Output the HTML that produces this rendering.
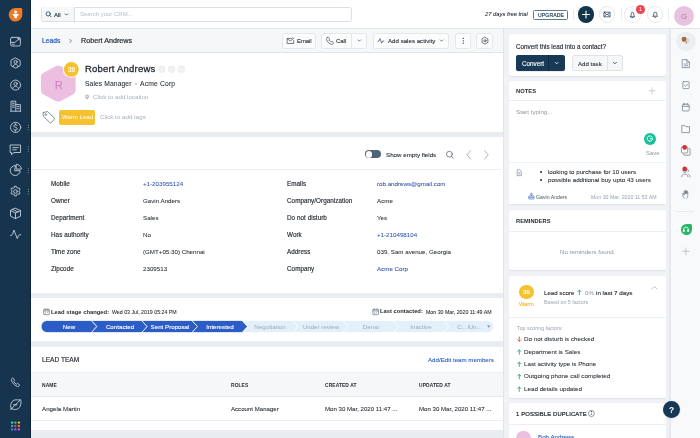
<!DOCTYPE html>
<html><head><meta charset="utf-8">
<style>
*{box-sizing:border-box;margin:0;padding:0}
html,body{width:700px;height:438px;overflow:hidden;background:#f0f2f5;font-family:"Liberation Sans",sans-serif;color:#12344d}
.a{position:absolute;white-space:nowrap}
svg{position:absolute;overflow:visible}
.card{position:absolute;background:#fff}
.t{position:absolute;white-space:nowrap;line-height:1;will-change:transform}
.lb{font-size:6.3px;color:#262c33;-webkit-text-stroke:0.15px #262c33;letter-spacing:0.05px}
.vl{font-size:6.2px;color:#262c33;-webkit-text-stroke:0.05px #262c33}
</style></head><body>
<!-- SIDEBAR -->
<div class="a" style="left:0;top:0;width:31px;height:438px;background:#16344e;border-right:1px solid #0d2338"></div>
<!-- logo -->
<svg style="left:0;top:0" width="31" height="31" viewBox="0 0 31 31">
  <path d="M15.5 8 h5.5 a1.3 1.3 0 0 1 1.3 1.3 v5.4 a6.8 6.8 0 1 1 -6.8 -6.7z" fill="#f07a23"/>
  <circle cx="15.6" cy="12.1" r="1.5" fill="#fff"/>
  <path d="M12.8 14.1 h5.6 a0.4 0.4 0 0 1 0.3 0.6 l-1.9 2 v1.1 a0.5 0.5 0 0 1 -0.5 0.5 h-1.3 a0.5 0.5 0 0 1 -0.5 -0.5 v-1.1 l-1.9 -2 a0.4 0.4 0 0 1 0.3 -0.6z" fill="#fff"/>
</svg>
<!-- sidebar icons -->
<svg style="left:0;top:0" width="31" height="438" viewBox="0 0 31 438" fill="none" stroke="#c5d0da" stroke-width="0.9" stroke-linecap="round" stroke-linejoin="round">
  <!-- dashboard -->
  <rect x="10.6" y="37.4" width="9.8" height="8.6" rx="1.5"/>
  <path d="M11.2 42.4 h3.6 l4.2 -3.4 M17.6 38.6 h1.6 v1.4 M12.2 44.2 h2"/>
  <!-- contacts -->
  <path d="M15.6 58 l4.6 2.6 v5 l-4.6 2.6 l-4.6 -2.6 v-5z"/>
  <circle cx="15.6" cy="62" r="1.6"/>
  <path d="M13 66.6 c0.4 -1.4 1.3 -2.2 2.6 -2.2 s2.2 0.8 2.6 2.2"/>
  <!-- accounts -->
  <circle cx="15.6" cy="85.1" r="5"/>
  <circle cx="15.6" cy="83.8" r="1.6"/>
  <path d="M12.7 88.5 c0.5 -1.5 1.5 -2.2 2.9 -2.2 s2.4 0.7 2.9 2.2"/>
  <!-- building -->
  <path d="M11 111 v-9.8 h4.8 v9.8 M15.8 104.6 h4.6 v6.4 M10.6 111.2 h10.2 M12.4 103.2 h2 M12.4 105.2 h2 M12.4 107.2 h2 M17.2 106.6 h1.8 M17.2 108.6 h1.8"/>
  <!-- deals $ -->
  <circle cx="15.6" cy="127.4" r="5.1"/>
  <path d="M17.2 125.6 c-0.4 -0.7 -1 -0.9 -1.7 -0.9 c-1 0 -1.7 0.5 -1.7 1.3 c0 1.8 3.5 0.9 3.5 2.8 c0 0.8 -0.8 1.3 -1.8 1.3 c-0.8 0 -1.4 -0.3 -1.8 -1 M15.5 123.8 v1 M15.5 130.2 v1"/>
  <!-- chat -->
  <path d="M10.5 145 h10 v7.5 h-6.5 l-2.5 2.2 v-2.2 h-1z"/>
  <path d="M12.8 147.6 h5.4 M12.8 149.8 h3.6"/>
  <!-- pie -->
  <path d="M15 165.5 a5 5 0 1 0 5.2 5.2 h-5.2z"/>
  <path d="M16.6 164.3 a5 5 0 0 1 4.8 4.8 h-4.8z"/>
  <!-- gear -->
  <circle cx="15.5" cy="191.5" r="1.8"/>
  <path d="M14.6 186.3 h1.8 l0.3 1.3 l1.2 0.7 l1.3 -0.4 l0.9 1.6 l-1 0.9 v1.4 l1 0.9 l-0.9 1.6 l-1.3 -0.4 l-1.2 0.7 l-0.3 1.3 h-1.8 l-0.3 -1.3 l-1.2 -0.7 l-1.3 0.4 l-0.9 -1.6 l1 -0.9 v-1.4 l-1 -0.9 l0.9 -1.6 l1.3 0.4 l1.2 -0.7z"/>
  <!-- cube -->
  <path d="M15.5 208.3 l5 2.3 v5.6 l-5 2.4 l-5 -2.4 v-5.6z M10.5 210.6 l5 2.4 l5 -2.4 M15.5 213 v5.6 M12.8 209.5 l5 2.4"/>
  <!-- activity -->
  <path d="M10.6 235.6 c1.2 0 1.8 -0.6 2.4 -2.6 l0.9 -3 l3.4 8.6 l1 -2.6 c0.4 -0.9 1 -1.4 2.4 -1.4"/>
  <!-- phone -->
  <path d="M12 378.5 c-0.6 0.5 -0.9 1.1 -0.5 2.2 c0.9 2.4 2.9 4.6 5.5 5.6 c1 0.4 1.7 0.1 2.2 -0.5 l0.6 -0.8 l-2.2 -1.6 l-1 0.8 c-1.4 -0.6 -2.3 -1.5 -2.9 -2.9 l0.8 -1 l-1.6 -2.2z"/>
  <!-- compass -->
  <path d="M11.2 408.6 c-1.6 -3.6 0.2 -8.6 4.8 -8.8 c1.6 0 3.4 0.4 4.6 -0.3 c1.2 4.4 -0.6 10 -5.4 10 c-1.4 0 -2.6 -0.4 -4 -0.9z"/>
  <path d="M10.6 409.6 l9.4 -9.4 M13.6 404.8 h3.4"/>
</svg>
<!-- grip dots -->
<svg style="left:0;top:0" width="31" height="438" fill="#8da0b2">
  <circle cx="28.3" cy="125.3" r="0.55"/><circle cx="28.3" cy="127.5" r="0.55"/><circle cx="28.3" cy="129.7" r="0.55"/>
  <circle cx="28.3" cy="146.8" r="0.55"/><circle cx="28.3" cy="149" r="0.55"/><circle cx="28.3" cy="151.2" r="0.55"/>
  <circle cx="28.3" cy="168.3" r="0.55"/><circle cx="28.3" cy="170.5" r="0.55"/><circle cx="28.3" cy="172.7" r="0.55"/>
  <circle cx="28.3" cy="189.3" r="0.55"/><circle cx="28.3" cy="191.5" r="0.55"/><circle cx="28.3" cy="193.7" r="0.55"/>
</svg>
<!-- app grid -->
<svg style="left:0;top:0" width="31" height="438">
  <circle cx="12.1" cy="422.6" r="1.2" fill="#3fd0d8"/>
  <circle cx="15.4" cy="422.6" r="1.2" fill="#3cc46a"/>
  <circle cx="18.9" cy="422.6" r="1.2" fill="#f5b82e"/>
  <circle cx="12.1" cy="426.0" r="1.2" fill="#4a8ff0"/>
  <circle cx="15.4" cy="426.0" r="1.2" fill="#e8473f"/>
  <circle cx="18.9" cy="426.0" r="1.2" fill="#f2702a"/>
  <circle cx="12.1" cy="429.4" r="1.2" fill="#3f7fd0"/>
  <circle cx="15.4" cy="429.4" r="1.2" fill="#9b59d0"/>
  <circle cx="18.9" cy="429.4" r="1.2" fill="#c05ad8"/>
</svg>

<!-- HEADER -->
<div class="a" style="left:31px;top:0;width:669px;height:29px;background:#fff;border-bottom:1px solid #e3e8ed"></div>
<div class="a" style="left:41.3px;top:6.5px;width:310.7px;height:15.8px;border:0.8px solid #d8dfe6;border-radius:2.5px;background:#fff"></div>
<div class="a" style="left:42.1px;top:7.3px;width:32.2px;height:14.2px;border-radius:2px 0 0 2px;background:#f5f7f9"></div>
<div class="a" style="left:74.3px;top:6.5px;width:0.8px;height:15.8px;background:#d8dfe6"></div>
<svg style="left:0;top:0" width="100" height="30" fill="none" stroke="#12344d" stroke-width="0.75" stroke-linecap="round">
  <circle cx="48.2" cy="13.9" r="2.1"/><path d="M49.8 15.5 l1.4 1.4"/>
  <path d="M65.3 13.9 l1.2 1.2 l1.2 -1.2"/>
</svg>
<div class="t" style="left:54.4px;top:11.9px;font-size:6px;color:#262c33;-webkit-text-stroke:0.15px #262c33">All</div>
<div class="t" style="left:80px;top:11.4px;font-size:6px;color:#b4bfca">Search your CRM...</div>

<div class="t" style="left:484.8px;top:12.3px;font-size:5.8px;font-style:italic;color:#262c33;-webkit-text-stroke:0.07px #262c33">27 days free trial</div>
<div class="a" style="left:532.6px;top:10.3px;width:35.2px;height:9.5px;border:0.9px solid #5d7a93;border-radius:1.5px"></div>
<div class="t" style="left:538px;top:13.3px;font-size:5.1px;color:#12344d;letter-spacing:0.12px;-webkit-text-stroke:0.15px #12344d">UPGRADE</div>
<div class="a" style="left:572.6px;top:9.5px;width:0.8px;height:10px;background:#e6eaee"></div>
<div class="a" style="left:577.8px;top:6.3px;width:16.4px;height:16.4px;border-radius:50%;background:#12344d"></div>
<svg style="left:0;top:0" width="700" height="30" fill="none" stroke-linecap="round">
  <path d="M586 11 v7 M582.5 14.5 h7" stroke="#fff" stroke-width="1.1"/>
</svg>
<div class="a" style="left:598.8px;top:6.3px;width:16.4px;height:16.4px;border-radius:50%;border:0.8px solid #e6eaee;background:#fff"></div>
<div class="a" style="left:620.5px;top:8px;width:0.8px;height:13px;background:#eceff2"></div>
<div class="a" style="left:624.3px;top:6.3px;width:16.4px;height:16.4px;border-radius:50%;border:0.8px solid #e6eaee;background:#fff"></div>
<div class="a" style="left:647.1px;top:6.3px;width:16.4px;height:16.4px;border-radius:50%;border:0.8px solid #e6eaee;background:#fff"></div>
<div class="a" style="left:668.4px;top:8px;width:0.8px;height:13px;background:#eceff2"></div>
<svg style="left:0;top:0" width="700" height="30" fill="none" stroke="#12344d" stroke-width="0.7" stroke-linecap="round" stroke-linejoin="round">
  <rect x="603.9" y="12.2" width="6.2" height="4.6" rx="0.4"/><path d="M604.1 12.5 l2.9 2.3 l2.9 -2.3 M604.2 16.5 l2 -1.8 M609.8 16.5 l-2 -1.8"/>
  <path d="M630.3 16.8 h4.4 l-0.6 -0.9 l-0.5 -2.6 a1.1 1.1 0 0 0 -2.2 0 l-0.5 2.6z M631.7 17.4 h1.6"/>
  <path d="M653 16.3 h4.6 l-0.7 -0.9 v-1.6 a1.6 1.6 0 0 0 -3.2 0 v1.6z M654.6 17.3 a0.8 0.6 0 0 0 1.4 0"/>
</svg>
<div class="a" style="left:635.8px;top:5.3px;width:9px;height:9px;border-radius:50%;background:#f0434d"></div>
<div class="t" style="left:638.9px;top:7.4px;font-size:5.4px;color:#fff">1</div>
<div class="a" style="left:673.6px;top:5.8px;width:20px;height:20px;border-radius:50%;background:#e9c2e0"></div>
<div class="t" style="left:680.6px;top:12.5px;font-size:7.9px;color:#a3849c">G</div>

<!-- MAIN BG -->
<div class="a" style="left:31px;top:29px;width:473.2px;height:409px;background:#e9edf1;border-right:0.8px solid #e0e5ea"></div>
<!-- BREADCRUMB -->
<div class="a" style="left:31px;top:29px;width:472.4px;height:24px;background:#f5f7f9;border-bottom:1px solid #dfe4e9"></div>
<div class="t" style="left:41.7px;top:37.7px;font-size:6.7px;color:#2c5cc5;-webkit-text-stroke:0.22px #2c5cc5">Leads</div>
<svg style="left:0;top:0" width="700" height="60" fill="none" stroke="#475867" stroke-width="0.7" stroke-linecap="round" stroke-linejoin="round">
  <path d="M69.8 39.3 l1.6 1.6 l-1.6 1.6"/>
</svg>
<div class="t" style="left:80.5px;top:36.9px;font-size:7.2px;color:#262c33;-webkit-text-stroke:0.2px #262c33">Robert Andrews</div>

<!-- BREADCRUMB ACTION BUTTONS -->
<div class="a" style="left:282.3px;top:32.8px;width:33.9px;height:16px;border:0.8px solid #e3e8ed;border-radius:2.5px;background:#fbfcfc"></div>
<div class="a" style="left:321.4px;top:32.8px;width:46px;height:16px;border:0.8px solid #e3e8ed;border-radius:2.5px;background:#fbfcfc"></div>
<div class="a" style="left:351.2px;top:32.8px;width:0.8px;height:16px;background:#e3e8ed"></div>
<div class="a" style="left:372.8px;top:32.8px;width:76.7px;height:16px;border:0.8px solid #e3e8ed;border-radius:2.5px;background:#fbfcfc"></div>
<div class="a" style="left:455.4px;top:32.8px;width:15.8px;height:16px;border:0.8px solid #e3e8ed;border-radius:2.5px;background:#fbfcfc"></div>
<div class="a" style="left:476.4px;top:32.8px;width:17.1px;height:16px;border:0.8px solid #e3e8ed;border-radius:2.5px;background:#fbfcfc"></div>
<svg style="left:0;top:0" width="700" height="60" fill="none" stroke="#283c4f" stroke-width="0.65" stroke-linecap="round" stroke-linejoin="round">
  <path d="M291.5 38.5 h-4.4 v5 h6.6 v-3"/><path d="M287.2 38.7 l3.1 2.3 l2.4 -1.8"/><path d="M292.6 37.4 l1.3 1.3"/>
  <path d="M327.2 37.6 c0.5 -0.5 1 -0.6 1.4 -0.2 l0.9 1.1 c0.3 0.4 0.2 0.8 -0.2 1.1 l-0.4 0.3 c0.3 0.9 1 1.7 1.9 2.1 l0.4 -0.4 c0.3 -0.3 0.7 -0.4 1.1 -0.1 l1 0.8 c0.4 0.4 0.3 0.9 -0.1 1.3 c-0.6 0.6 -1.3 0.9 -2 0.7 c-2.3 -0.7 -4.2 -2.6 -4.7 -4.9 c-0.1 -0.6 0.2 -1.2 0.7 -1.8z"/>
  <path d="M358 39.9 l1.3 1.3 l1.3 -1.3"/>
  <path d="M378 41.2 h0.9 l1.1 -2.6 l1.6 4.6 l1.1 -2.2 h1.2"/>
  <path d="M440.3 39.9 l1.3 1.3 l1.3 -1.3"/>
  <path d="M485 37.4 l2.9 1.7 v3.4 l-2.9 1.7 l-2.9 -1.7 v-3.4z"/><circle cx="485" cy="40.8" r="1.1"/>
</svg>
<svg style="left:0;top:0" width="700" height="60" fill="#12344d">
  <circle cx="463.3" cy="38.4" r="0.6"/><circle cx="463.3" cy="40.8" r="0.6"/><circle cx="463.3" cy="43.2" r="0.6"/>
</svg>
<div class="t" style="left:296.9px;top:37.9px;font-size:6px;letter-spacing:-0.08px;color:#262c33;-webkit-text-stroke:0.1px #262c33">Email</div>
<div class="t" style="left:336px;top:37.9px;font-size:6px;letter-spacing:-0.05px;color:#262c33;-webkit-text-stroke:0.1px #262c33">Call</div>
<div class="t" style="left:387.6px;top:37.9px;font-size:6.15px;color:#262c33;-webkit-text-stroke:0.1px #262c33">Add sales activity</div>

<!-- PROFILE CARD -->
<div class="card" style="left:31px;top:53px;width:472.4px;height:78.8px"></div>
<svg style="left:0;top:0" width="700" height="140">
  <path d="M55.62 66.13 Q58.25 64.70 60.88 66.13 L72.97 72.72 Q75.60 74.15 75.60 77.15 L75.60 90.05 Q75.60 93.05 72.97 94.48 L60.88 101.07 Q58.25 102.50 55.62 101.07 L43.53 94.48 Q40.90 93.05 40.90 90.05 L40.90 77.15 Q40.90 74.15 43.53 72.72 Z" fill="#ecbfe1"/>
  <circle cx="71.3" cy="69.4" r="8.4" fill="#fff"/>
  <circle cx="71.3" cy="69.4" r="7.4" fill="#f5c12e"/>
  <circle cx="161.7" cy="69.2" r="3.7" fill="#efefef"/><circle cx="171.5" cy="69.2" r="3.7" fill="#efefef"/><circle cx="181.3" cy="69.2" r="3.7" fill="#efefef"/>
  <path d="M162.3 67.4 h-0.4 a0.5 0.5 0 0 0 -0.5 0.5 v3.6 M161 69 h1.2" stroke="#fff" stroke-width="0.55" fill="none"/>
  <path d="M169.6 68.6 l1.4 1.4 l2.4 -2" stroke="#fff" stroke-width="0.6" fill="none"/>
  <path d="M179.9 68.6 v2.2 M181.1 70.8 v-2.2 M181.1 69.4 a0.9 0.9 0 0 1 1.6 0.2 v1.2" stroke="#fff" stroke-width="0.55" fill="none"/>
</svg>
<div class="t" style="left:54.6px;top:79.9px;font-size:10.6px;color:#cf86c1;-webkit-text-stroke:0.25px #cf86c1">R</div>
<div class="t" style="left:67.8px;top:66.6px;font-size:6.3px;color:#fff;-webkit-text-stroke:0.15px #fff">39</div>
<div class="t" style="left:85.4px;top:63.9px;font-size:9.5px;letter-spacing:0.2px;color:#1f2730;-webkit-text-stroke:0.3px #1f2730">Robert Andrews</div>
<div class="t" style="left:85.4px;top:80.6px;font-size:6.7px;letter-spacing:0.12px;color:#262c33;-webkit-text-stroke:0.07px #262c33">Sales Manager</div>
<div class="a" style="left:134.6px;top:82.5px;width:2px;height:2px;border-radius:50%;background:#b8c2cb"></div>
<div class="t" style="left:140px;top:80.6px;font-size:6.7px;letter-spacing:0.2px;color:#262c33;-webkit-text-stroke:0.07px #262c33">Acme Corp</div>
<svg style="left:0;top:0" width="700" height="140">
  <path d="M87.1 99.8 c-1.3 -1.6 -1.9 -2.6 -1.9 -3.4 a1.9 1.9 0 0 1 3.8 0 c0 0.8 -0.6 1.8 -1.9 3.4z" fill="#b3bdc7"/>
  <circle cx="87.1" cy="96.4" r="0.7" fill="#fff"/>
</svg>
<div class="t" style="left:92.6px;top:94.4px;font-size:6.2px;color:#a4b0bc">Click to add location</div>
<svg style="left:0;top:0" width="700" height="140" fill="none" stroke="#5a6f83" stroke-width="0.8" stroke-linejoin="round">
  <path d="M43 112.5 l0.3 3.6 l6.6 6.6 a0.8 0.8 0 0 0 1.1 0 l3.4 -3.4 a0.8 0.8 0 0 0 0 -1.1 l-6.6 -6.6 z"/>
  <circle cx="45.8" cy="114.6" r="0.8"/>
</svg>
<div class="a" style="left:59.1px;top:109.5px;width:36px;height:15px;border-radius:2px;background:#f5c12e"></div>
<div class="t" style="left:62.2px;top:114.2px;font-size:6.05px;color:#fff">Warm Lead</div>
<div class="t" style="left:100px;top:113.8px;font-size:6.2px;color:#a4b0bc">Click to add tags</div>

<!-- DETAILS CARD -->
<div class="card" style="left:31px;top:136.7px;width:472.4px;height:156.4px"></div>
<div class="a" style="left:31px;top:169px;width:470px;height:1px;background:#ebeff3"></div>
<div class="a" style="left:365px;top:150.4px;width:15.8px;height:8px;border-radius:4px;background:#4f6477"></div>
<div class="a" style="left:365.6px;top:151px;width:6.8px;height:6.8px;border-radius:50%;background:#fff;box-shadow:0 0 0.6px rgba(0,0,0,.4)"></div>
<div class="t" style="left:385.7px;top:151.7px;font-size:6.2px;color:#262c33;-webkit-text-stroke:0.1px #262c33">Show empty fields</div>
<svg style="left:0;top:0" width="700" height="200" fill="none" stroke="#475867" stroke-width="0.7" stroke-linecap="round" stroke-linejoin="round">
  <circle cx="449.4" cy="154.2" r="2.9"/><path d="M451.5 156.3 l2 2"/>
  <path d="M470.6 150.6 l-3.6 4.2 l3.6 4.2" stroke="#8593a1"/>
  <path d="M484.6 150.6 l3.6 4.2 l-3.6 4.2" stroke="#8593a1"/>
</svg>
<div class="t lb" style="left:50.8px;top:181.0px">Mobile</div><div class="t vl" style="left:143px;top:181.0px;color:#2c5cc5">+1-203955124</div>
<div class="t lb" style="left:286.8px;top:181.0px">Emails</div><div class="t vl" style="left:377px;top:181.0px;color:#2c5cc5">rob.andrews@gmail.com</div>
<div class="t lb" style="left:50.8px;top:198.0px">Owner</div><div class="t vl" style="left:143px;top:198.0px;">Gavin Anders</div>
<div class="t lb" style="left:286.8px;top:198.0px">Company/Organization</div><div class="t vl" style="left:377px;top:198.0px;">Acme</div>
<div class="t lb" style="left:50.8px;top:215.0px">Department</div><div class="t vl" style="left:143px;top:215.0px;">Sales</div>
<div class="t lb" style="left:286.8px;top:215.0px">Do not disturb</div><div class="t vl" style="left:377px;top:215.0px;">Yes</div>
<div class="t lb" style="left:50.8px;top:232.0px">Has authority</div><div class="t vl" style="left:143px;top:232.0px;">No</div>
<div class="t lb" style="left:286.8px;top:232.0px">Work</div><div class="t vl" style="left:377px;top:232.0px;color:#2c5cc5">+1-210498104</div>
<div class="t lb" style="left:50.8px;top:249.0px">Time zone</div><div class="t vl" style="left:143px;top:249.0px;">(GMT+05:30) Chennai</div>
<div class="t lb" style="left:286.8px;top:249.0px">Address</div><div class="t vl" style="left:377px;top:249.0px;">039, Sam avenue, Georgia</div>
<div class="t lb" style="left:50.8px;top:266.0px">Zipcode</div><div class="t vl" style="left:143px;top:266.0px;">2309513</div>
<div class="t lb" style="left:286.8px;top:266.0px">Company</div><div class="t vl" style="left:377px;top:266.0px;color:#2c5cc5">Acme Corp</div>

<!-- STAGE CARD -->
<div class="card" style="left:31px;top:298px;width:472.4px;height:43px"></div>
<svg style="left:0;top:0" width="700" height="438" fill="none" stroke="#475867" stroke-width="0.6">
  <rect x="43.7" y="309.3" width="5.6" height="5.4" rx="0.6"/><path d="M43.7 310.9 h5.6 M45.1 308.5 v1.4 M47.9 308.5 v1.4 M45.3 312.3 h0.8 M47 312.3 h0.8 M45.3 313.6 h0.8"/>
  <rect x="372.8" y="309.3" width="5.6" height="5.4" rx="0.6"/><path d="M372.8 310.9 h5.6 M374.2 308.5 v1.4 M377 308.5 v1.4 M374.4 312.3 h0.8 M376.1 312.3 h0.8 M374.4 313.6 h0.8"/>
</svg>
<div class="t" style="left:51.4px;top:309.7px;font-size:5.85px;font-weight:bold;color:#262c33">Lead stage changed:</div>
<div class="t" style="left:111.7px;top:310.2px;font-size:5.25px;color:#262c33;-webkit-text-stroke:0.07px #262c33">Wed 03 Jul, 2019 05:24 PM</div>
<div class="t" style="left:380px;top:309.3px;font-size:5.8px;font-weight:bold;color:#262c33">Last contacted:</div>
<div class="t" style="left:425.5px;top:309.9px;font-size:5.25px;color:#262c33;-webkit-text-stroke:0.07px #262c33">Mon 30 Mar, 2020 11:49 AM</div>
<svg style="left:0;top:0" width="700" height="438">
<path d="M47.15 320.5 H91.39 L96.89 326.55 L91.39 332.6 H47.15 A6.05 6.05 0 0 1 47.15 320.5Z" fill="#2c5cc5" stroke="#fff" stroke-width="0.75" stroke-linejoin="miter"/>
<path d="M91.39 320.5 H141.68 L147.18 326.55 L141.68 332.6 H91.39 L96.89 326.55Z" fill="#2c5cc5" stroke="#fff" stroke-width="0.75" stroke-linejoin="miter"/>
<path d="M141.68 320.5 H191.97 L197.47 326.55 L191.97 332.6 H141.68 L147.18 326.55Z" fill="#2c5cc5" stroke="#fff" stroke-width="0.75" stroke-linejoin="miter"/>
<path d="M191.97 320.5 H242.26 L247.76 326.55 L242.26 332.6 H191.97 L197.47 326.55Z" fill="#2c5cc5" stroke="#fff" stroke-width="0.75" stroke-linejoin="miter"/>
<path d="M242.26 320.5 H292.54 L298.04 326.55 L292.54 332.6 H242.26 L247.76 326.55Z" fill="#e3effb" stroke="#fff" stroke-width="0.75" stroke-linejoin="miter"/>
<path d="M292.54 320.5 H342.83 L348.33 326.55 L342.83 332.6 H292.54 L298.04 326.55Z" fill="#e3effb" stroke="#fff" stroke-width="0.75" stroke-linejoin="miter"/>
<path d="M342.83 320.5 H393.12 L398.62 326.55 L393.12 332.6 H342.83 L348.33 326.55Z" fill="#e3effb" stroke="#fff" stroke-width="0.75" stroke-linejoin="miter"/>
<path d="M393.12 320.5 H443.41 L448.91 326.55 L443.41 332.6 H393.12 L398.62 326.55Z" fill="#e3effb" stroke="#fff" stroke-width="0.75" stroke-linejoin="miter"/>
<path d="M443.41 320.5 H487.65 A6.05 6.05 0 0 1 487.65 332.6 H443.41 L448.91 326.55Z" fill="#e3effb" stroke="#fff" stroke-width="0.75" stroke-linejoin="miter"/>

  <path d="M487 325.6 h3.4 l-1.7 2.2z" fill="#7f93a6"/>
</svg>
<div class="t" style="left:29.24px;width:80px;text-align:center;top:323.55px;font-size:6.2px;color:#fff;-webkit-text-stroke:0.12px #fff">New</div>
<div class="t" style="left:79.53px;width:80px;text-align:center;top:323.55px;font-size:6.2px;color:#fff;-webkit-text-stroke:0.12px #fff">Contacted</div>
<div class="t" style="left:129.82px;width:80px;text-align:center;top:323.55px;font-size:6.2px;color:#fff;-webkit-text-stroke:0.12px #fff">Sent Proposal</div>
<div class="t" style="left:180.11px;width:80px;text-align:center;top:323.55px;font-size:6.2px;color:#fff;-webkit-text-stroke:0.12px #fff">Interested</div>
<div class="t" style="left:230.40px;width:80px;text-align:center;top:323.55px;font-size:6.2px;color:#9ea9b4;">Negotiation</div>
<div class="t" style="left:280.69px;width:80px;text-align:center;top:323.55px;font-size:6.2px;color:#9ea9b4;">Under review</div>
<div class="t" style="left:330.98px;width:80px;text-align:center;top:323.55px;font-size:6.2px;color:#9ea9b4;">Demo</div>
<div class="t" style="left:381.27px;width:80px;text-align:center;top:323.55px;font-size:6.2px;color:#9ea9b4;">Inactive</div>
<div class="t" style="left:428.56px;width:80px;text-align:center;top:323.55px;font-size:6.2px;color:#9ea9b4;letter-spacing:-0.25px">C... /Un...</div>

<!-- LEAD TEAM CARD -->
<div class="card" style="left:31px;top:347.3px;width:472.4px;height:83px"></div>
<div class="t" style="left:41.7px;top:357px;font-size:6.6px;color:#262c33;-webkit-text-stroke:0.15px #262c33">LEAD TEAM</div>
<div class="t" style="left:428px;top:357.2px;font-size:6.15px;color:#2c5cc5;-webkit-text-stroke:0.1px #2c5cc5">Add/Edit team members</div>
<div class="a" style="left:31px;top:371.6px;width:472.4px;height:25px;background:#f5f7f9;border-top:0.8px solid #eef1f4;border-bottom:0.8px solid #e3e8ed"></div>
<div class="t" style="left:41.8px;top:383.7px;font-size:4.9px;font-weight:bold;color:#262c33;letter-spacing:0.1px">NAME</div>
<div class="t" style="left:230.5px;top:383.7px;font-size:4.9px;font-weight:bold;color:#262c33;letter-spacing:0.1px">ROLES</div>
<div class="t" style="left:324.7px;top:383.7px;font-size:4.9px;font-weight:bold;color:#262c33;letter-spacing:0.1px">CREATED AT</div>
<div class="t" style="left:419px;top:383.7px;font-size:4.9px;font-weight:bold;color:#262c33;letter-spacing:0.1px">UPDATED AT</div>
<div class="t" style="left:41.8px;top:405.9px;font-size:6.2px;color:#262c33;-webkit-text-stroke:0.07px #262c33">Angela Martin</div>
<div class="t" style="left:230.5px;top:405.9px;font-size:6.1px;color:#262c33;-webkit-text-stroke:0.07px #262c33">Account Manager</div>
<div class="t" style="left:324.7px;top:405.9px;font-size:6.1px;color:#262c33;-webkit-text-stroke:0.07px #262c33">Mon 30 Mar, 2020 11:47 ...</div>
<div class="t" style="left:419px;top:405.9px;font-size:6.1px;color:#262c33;-webkit-text-stroke:0.07px #262c33">Mon 30 Mar, 2020 11:47 ...</div>
<div class="a" style="left:31px;top:419.6px;width:472.4px;height:0.8px;background:#ebeff3"></div>
<!-- RIGHT PANEL -->
<div class="card" style="left:509px;top:33.5px;width:157px;height:42.5px;border-radius:2px;box-shadow:0 0.5px 1px rgba(18,52,77,.08)"></div>
<div class="t" style="left:516.4px;top:44.3px;font-size:6.3px;color:#262c33;-webkit-text-stroke:0.15px #262c33">Convert this lead into a contact?</div>
<div class="a" style="left:516.3px;top:55px;width:48.5px;height:16.2px;border-radius:2px;background:#183a56;box-shadow:0 0.5px 0.5px rgba(0,0,0,.15)"></div>
<div class="a" style="left:548.2px;top:55px;width:0.8px;height:16.2px;background:#0f2b42"></div>
<div class="t" style="left:521.8px;top:60.6px;font-size:6.3px;color:#fff;-webkit-text-stroke:0.12px #fff">Convert</div>
<div class="a" style="left:572.2px;top:55px;width:50.7px;height:16.3px;border-radius:2px;background:#f5f7f9;border:1px solid #dfe4e9"></div>
<div class="a" style="left:606.8px;top:55px;width:1px;height:16.3px;background:#dfe4e9"></div>
<div class="t" style="left:577.6px;top:60.6px;font-size:6.1px;color:#262c33;-webkit-text-stroke:0.08px #262c33">Add task</div>
<svg style="left:0;top:0" width="700" height="438" fill="none" stroke-linecap="round" stroke-linejoin="round" stroke-width="0.8">
  <path d="M555.2 62.3 l1.5 1.5 l1.5 -1.5" stroke="#fff"/>
  <path d="M613.4 62.3 l1.5 1.5 l1.5 -1.5" stroke="#12344d"/>
</svg>

<div class="card" style="left:509px;top:81.2px;width:157px;height:123.3px;border-radius:2px;box-shadow:0 0.5px 1px rgba(18,52,77,.08)"></div>
<div class="t" style="left:516.4px;top:88.6px;font-size:5.75px;font-weight:bold;color:#262c33;letter-spacing:0.05px">NOTES</div>
<svg style="left:0;top:0" width="700" height="438" fill="none" stroke="#b5c0cb" stroke-width="0.7">
  <path d="M652.1 87.3 v7 M648.6 90.8 h7"/>
</svg>
<div class="a" style="left:509px;top:100px;width:157px;height:0.8px;background:#ebeff3"></div>
<div class="t" style="left:516.3px;top:108.6px;font-size:6.2px;color:#8e979f">Start typing...</div>
<div class="a" style="left:643.8px;top:132.9px;width:11.8px;height:11.8px;border-radius:50%;background:#15c39a"></div>
<svg style="left:0;top:0" width="700" height="438" fill="none" stroke="#fff" stroke-width="1.1" stroke-linecap="round">
  <path d="M652.2 137.1 a2.7 2.7 0 1 0 0.4 1.6 h-2.2" stroke-width="1"/>
</svg>
<div class="t" style="left:645.5px;top:151.3px;font-size:5.9px;color:#8e979f">Save</div>
<div class="a" style="left:509px;top:162.3px;width:157px;height:42.2px;background:#fff;border-top:0.8px solid #f0f3f6"></div>
<svg style="left:0;top:0" width="700" height="438" fill="none" stroke="#6f7d8a" stroke-width="0.6" stroke-linejoin="round">
  <path d="M517.2 169.8 h2.6 l1.5 1.5 v4.4 h-4.1z M518.2 172.6 h2.1 M518.2 174 h2.1"/>
</svg>
<div class="a" style="left:540.1px;top:170.6px;width:2px;height:2px;border-radius:50%;background:#12344d"></div>
<div class="a" style="left:540.1px;top:179.4px;width:2px;height:2px;border-radius:50%;background:#12344d"></div>
<div class="t" style="left:547.6px;top:168.7px;font-size:6.2px;color:#262c33;-webkit-text-stroke:0.07px #262c33">looking to purchase for 10 users</div>
<div class="t" style="left:547.6px;top:177.1px;font-size:6.25px;color:#262c33;-webkit-text-stroke:0.07px #262c33">possible additional buy upto 43 users</div>
<svg style="left:0;top:0" width="700" height="438" fill="none" stroke="#2c5cc5" stroke-width="0.6" stroke-linejoin="round">
  <rect x="528.8" y="196" width="5.2" height="3" rx="0.3"/><circle cx="531.4" cy="194.2" r="0.9"/><path d="M531.4 195.1 v0.9 M528.8 197.4 h5.2"/>
</svg>
<div class="t" style="left:535.8px;top:194.7px;font-size:5.2px;color:#475867">Gavin Anders</div>
<div class="t" style="left:590.8px;top:194.9px;font-size:5.25px;color:#97a4b1">Mon 30 Mar, 2020 11:53 AM</div>

<div class="card" style="left:509px;top:210px;width:157px;height:60.2px;border-radius:2px;box-shadow:0 0.5px 1px rgba(18,52,77,.08)"></div>
<div class="t" style="left:516.3px;top:218.5px;font-size:5.7px;font-weight:bold;color:#262c33;letter-spacing:0.05px">REMINDERS</div>
<div class="a" style="left:509px;top:231.2px;width:157px;height:0.8px;background:#ebeff3"></div>
<div class="t" style="left:559.7px;top:248.6px;font-size:6.1px;color:#8a939c">No reminders found.</div>

<div class="card" style="left:509px;top:275.8px;width:157px;height:122.2px;border-radius:2px;box-shadow:0 0.5px 1px rgba(18,52,77,.08)"></div>
<div class="a" style="left:519.3px;top:284.7px;width:14.4px;height:14.4px;border-radius:50%;background:#f5c12e"></div>
<div class="t" style="left:523.1px;top:289.1px;font-size:6.2px;color:#fff;-webkit-text-stroke:0.15px #fff">39</div>
<div class="t" style="left:518.7px;top:302.4px;font-size:5.6px;color:#f2b625;-webkit-text-stroke:0.1px #f2b625">Warm</div>
<div class="t" style="left:543.7px;top:289.6px;font-size:6.15px;color:#262c33;-webkit-text-stroke:0.1px #262c33">Lead score</div>
<svg style="left:0;top:0" width="700" height="438" fill="none" stroke-linecap="round" stroke-linejoin="round" stroke-width="0.8">
  <path d="M579.4 294.7 v-4.6 M577.8 291.7 l1.6 -1.6 l1.6 1.6" stroke="#1ea783" stroke-width="0.85"/>
  <path d="M652 288.9 l2.5 -2.5 l2.5 2.5" stroke="#92a2b1" stroke-width="0.65"/>
</svg>
<div class="t" style="left:584.7px;top:289.6px;font-size:6.15px;color:#8392a1">0%</div>
<div class="t" style="left:595.6px;top:289.6px;font-size:6.25px;color:#262c33;-webkit-text-stroke:0.12px #262c33">in last 7 days</div>
<div class="t" style="left:543.7px;top:299.6px;font-size:5.3px;color:#97a4b1">Based on 5 factors</div>
<div class="a" style="left:509px;top:316.6px;width:157px;height:0.8px;background:#ebeff3"></div>
<div class="t" style="left:516.5px;top:325.5px;font-size:5.3px;color:#97a4b1">Top scoring factors:</div>
<svg style="left:0;top:0" width="700" height="438" fill="none" stroke-linecap="round" stroke-linejoin="round" stroke-width="0.85">
  <path d="M519.3 336.9 v4.4 M517.7 339.7 l1.6 1.6 l1.6 -1.6" stroke="#e0474c"/>
  <path d="M519.3 354.3 v-4.4 M517.7 351.5 l1.6 -1.6 l1.6 1.6" stroke="#1ea783"/>
  <path d="M519.3 366.5 v-4.4 M517.7 363.7 l1.6 -1.6 l1.6 1.6" stroke="#1ea783"/>
  <path d="M519.3 378.8 v-4.4 M517.7 376.0 l1.6 -1.6 l1.6 1.6" stroke="#1ea783"/>
  <path d="M519.3 391.4 v-4.4 M517.7 388.6 l1.6 -1.6 l1.6 1.6" stroke="#1ea783"/>
</svg>
<div class="t" style="left:523.9px;top:335.87px;font-size:6.25px;color:#262c33;-webkit-text-stroke:0.05px #262c33">Do not disturb is checked</div>
<div class="t" style="left:523.9px;top:348.67px;font-size:6.25px;color:#262c33;-webkit-text-stroke:0.05px #262c33">Department is Sales</div>
<div class="t" style="left:523.9px;top:360.87px;font-size:6.25px;color:#262c33;-webkit-text-stroke:0.05px #262c33">Last activity type is Phone</div>
<div class="t" style="left:523.9px;top:373.17px;font-size:6.25px;color:#262c33;-webkit-text-stroke:0.05px #262c33">Outgoing phone call completed</div>
<div class="t" style="left:523.9px;top:385.77px;font-size:6.25px;color:#262c33;-webkit-text-stroke:0.05px #262c33">Lead details updated</div>

<div class="card" style="left:509px;top:403.3px;width:157px;height:40px;border-radius:2px;box-shadow:0 0.5px 1px rgba(18,52,77,.08)"></div>
<div class="t" style="left:516.4px;top:411.8px;font-size:5.9px;color:#262c33;letter-spacing:0.12px;-webkit-text-stroke:0.22px #262c33">1 POSSIBLE DUPLICATE</div>
<svg style="left:0;top:0" width="700" height="438" fill="none" stroke="#475867" stroke-width="0.6">
  <circle cx="591.4" cy="413.5" r="3"/><path d="M591.4 412.7 v2.5"/>
</svg>
<div class="a" style="left:591.05px;top:411.1px;width:0.7px;height:0.7px;background:#475867"></div>
<div class="a" style="left:509px;top:424px;width:157px;height:0.8px;background:#ebeff3"></div>
<div class="a" style="left:516px;top:430.7px;width:14.6px;height:14.6px;border-radius:50%;background:#ebbfe0"></div>
<div class="t" style="left:538.4px;top:434.3px;font-size:6.2px;color:#2c5cc5;-webkit-text-stroke:0.1px #2c5cc5">Bob Andrews</div>

<!-- RIGHT RAIL -->
<div class="a" style="left:670px;top:29px;width:30px;height:409px;background:#f8f9fb;border-left:1px solid #e4e8ec;box-shadow:-1px 0 2px rgba(18,52,77,.05)"></div>
<div class="a" style="left:676.2px;top:31.5px;width:19.5px;height:19.5px;border-radius:50%;background:#eceff2"></div>
<svg style="left:0;top:0" width="700" height="438" fill="none" stroke="#5f6f7e" stroke-width="0.65" stroke-linejoin="round" stroke-linecap="round">
  <path d="M682.6 59.6 h4.2 l2.6 2.6 v5.4 h-6.8z M686.8 59.6 v2.6 h2.6 M684.2 64 h3.4 M684.2 65.8 h3.4"/>
  <rect x="682.9" y="81.6" width="6.2" height="7" rx="0.8"/><path d="M684.4 85.2 l1.2 1.2 l2 -2.2"/>
  <rect x="682.4" y="104.2" width="6.8" height="6.8" rx="1"/><path d="M682.4 106.4 h6.8 M684.3 103.4 v1.6 M687.3 103.4 v1.6"/>
  <path d="M682.2 125.6 h2.8 l0.9 1.1 h3.6 v5.9 h-7.3z"/>
  <rect x="681.4" y="147" width="6.3" height="6" rx="0.8"/><path d="M688.9 148.6 h0.6 a0.6 0.6 0 0 1 0.6 0.6 v5.4 a0.6 0.6 0 0 1 -0.6 0.6 h-5.2 a0.6 0.6 0 0 1 -0.6 -0.6 v-0.6"/>
  <circle cx="684.8" cy="170.6" r="1.7"/><path d="M681.6 176.8 c0.3 -1.8 1.4 -2.8 3.2 -2.8 s2.9 1 3.2 2.8 M687.4 169.2 a1.7 1.7 0 0 1 0.4 3 M688.6 174.4 c0.8 0.4 1.3 1.2 1.5 2.4"/>
  <g transform="translate(0.3 1)"><path d="M684 197.2 c-0.8 -0.8 -1.4 -1.6 -1.4 -2.6 l-0.3 -1.8 c0 -0.5 0.9 -0.6 1.1 0 l0.5 1.3 v-3.6 c0 -0.6 0.9 -0.6 0.9 0 v2.4 v-3.2 c0 -0.6 0.9 -0.6 0.9 0 v3 v-2.6 c0 -0.6 0.9 -0.6 0.9 0 v2.8 v-2 c0 -0.6 0.9 -0.6 0.9 0 v3.6 c0 1 -0.3 1.8 -1 2.7"/></g>
</svg>
<svg style="left:0;top:0" width="700" height="438">
  <circle cx="684.7" cy="147.4" r="2.3" fill="#d72d30"/>
  <circle cx="684.7" cy="168.9" r="2.3" fill="#d72d30"/>
  <path d="M684.6 38.6 l3 -0.6 l1.6 1.2 l0.2 2.4 l-1 1.4 l-1.4 0.8 l-1.4 -0.6 l-0.8 -1.6z" fill="#dcd6d4"/>
  <path d="M681.8 37.6 l2.6 -0.8 l1.8 0.6 l0.2 2.6 l-1.2 1.4 l-2.2 0.4 l-1.2 -1.4z" fill="#a8672f"/>
  <path d="M685.4 41.6 l1.2 0.2 l0.4 1.4 l-1.2 0.4z" fill="#9c7f84"/>
</svg>
<div class="a" style="left:677px;top:211.4px;width:17px;height:0.6px;background:#e8ebee"></div>
<div class="a" style="left:680.5px;top:223.8px;width:11px;height:11px;border-radius:50% 1.5px 50% 50%;background:#26b569"></div>
<svg style="left:0;top:0" width="700" height="438" fill="none" stroke="#fff" stroke-width="0.8" stroke-linecap="round">
  <path d="M683.7 230.7 v-1.4 a2.3 2.3 0 0 1 4.6 0 v1.4"/>
  <rect x="683.3" y="229.8" width="1" height="2" rx=".4" fill="#fff"/><rect x="687.7" y="229.8" width="1" height="2" rx=".4" fill="#fff"/>
</svg>
<svg style="left:0;top:0" width="700" height="438" fill="none" stroke="#aab5c0" stroke-width="0.7">
  <path d="M685.9 247.6 v7.4 M682.2 251.3 h7.4"/>
</svg>
<div class="a" style="left:663.2px;top:401.2px;width:17.2px;height:17.2px;border-radius:50%;background:#173754;box-shadow:0 0.5px 1.5px rgba(0,0,0,.2)"></div>
<div class="t" style="left:669.3px;top:406.2px;font-size:8.4px;font-weight:bold;color:#fff">?</div>

</body></html>
